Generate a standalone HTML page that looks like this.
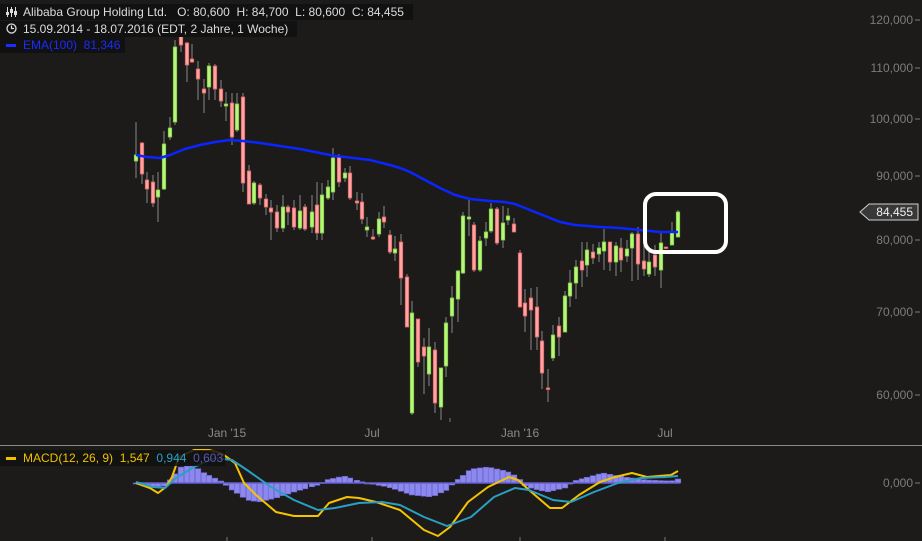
<!DOCTYPE html>
<html><head><meta charset="utf-8"><style>
html,body{margin:0;padding:0;background:#1c1b1a;width:922px;height:541px;overflow:hidden;font-family:"Liberation Sans",sans-serif}
svg{position:absolute;left:0;top:0}
.hd{position:absolute;left:0;height:16px;background:#111;color:#dcdcdc;font-size:12px;line-height:16px;padding-left:23px;white-space:nowrap;box-sizing:border-box}
.ic{position:absolute;left:6px;top:3px}
</style></head><body>
<svg id="s" width="922" height="541" viewBox="0 0 922 541"></svg>
<div class="hd" style="top:4px;width:413px"><svg class="ic" width="12" height="10" viewBox="0 0 12 10"><g stroke="#ddd" stroke-width="1"><line x1="1.5" y1="0" x2="1.5" y2="10"/><line x1="5.5" y1="0" x2="5.5" y2="10"/><line x1="9.5" y1="0" x2="9.5" y2="10"/></g><g fill="#ddd"><rect x="0" y="5" width="3" height="3"/><rect x="4" y="2" width="3" height="4"/><rect x="8" y="4" width="3" height="4"/></g></svg>Alibaba Group Holding Ltd.&nbsp;&nbsp; O: 80,600&nbsp; H: 84,700&nbsp; L: 80,600&nbsp; C: 84,455</div>
<div class="hd" style="top:21px;width:297px"><svg class="ic" width="11" height="11" viewBox="0 0 11 11" style="top:2px"><circle cx="5.5" cy="5.5" r="4.5" fill="none" stroke="#ddd" stroke-width="1.3"/><path d="M5.5 2.5V5.5H8" fill="none" stroke="#ddd" stroke-width="1.2"/></svg>15.09.2014 - 18.07.2016 (EDT, 2 Jahre, 1 Woche)</div>
<div class="hd" style="top:37px;width:125px;color:#1a2cff"><b style="position:absolute;left:6px;top:7px;width:10px;height:3px;background:#1a2cff"></b>EMA(100)&nbsp; 81,346</div>
<div class="hd" style="top:450px;width:225px;background:rgba(17,17,17,.85);color:#f0c000"><b style="position:absolute;left:6px;top:7px;width:10px;height:3px;background:#f0c000"></b>MACD(12, 26, 9)&nbsp; 1,547&nbsp; <span style="color:#2aa0c8">0,944</span>&nbsp; <span style="color:#5a56b0">0,603</span></div>
<script>
var s=document.getElementById('s'),h='';
function L(x1,y1,x2,y2,c,w){h+='<line x1="'+x1+'" y1="'+y1+'" x2="'+x2+'" y2="'+y2+'" stroke="'+c+'" stroke-width="'+(w||1)+'"/>';}
function T(x,y,t,c,a){h+='<text x="'+x+'" y="'+y+'" fill="'+c+'" font-size="12" font-family="Liberation Sans" text-anchor="'+(a||'end')+'">'+t+'</text>';}
var C=[[136,'g',155,161,122,178],[142,'r',143,174,142,184],[147,'r',180,189,172,203],[153,'r',182,203,175,207],[158,'g',190,197,172,222],[164,'g',144,189,131,190],[170,'g',128,137,117,140],[175,'g',47,122,40,125],[181,'r',34,45,33,52],[187,'r',43,65,42,82],[192,'r',59,62,44,63],[198,'r',69,79,61,100],[204,'r',89,93,79,113],[209,'g',66,87,63,100],[215,'r',66,89,64,100],[221,'r',89,101,80,107],[226,'g',104,106,92,121],[232,'r',103,137,93,145],[237,'g',104,130,93,132],[243,'r',97,183,93,192],[249,'r',171,204,165,204],[254,'g',183,203,181,205],[260,'r',185,198,183,205],[266,'r',199,207,194,215],[271,'r',208,212,200,240],[277,'r',212,228,205,232],[283,'g',207,228,195,232],[288,'r',207,212,205,225],[294,'r',208,227,200,230],[300,'g',211,228,195,230],[305,'r',207,229,204,231],[312,'g',212,227,195,233],[317,'r',205,233,182,240],[322,'g',195,233,183,240],[328,'g',187,198,180,200],[333,'g',158,192,148,200],[339,'r',157,182,154,187],[345,'g',173,178,168,182],[350,'r',173,198,166,200],[357,'r',201,203,192,210],[362,'r',202,219,193,224],[367,'g',227,230,217,237],[373,'r',237,239,229,240],[379,'g',219,234,212,237],[384,'r',217,222,206,228],[390,'r',235,252,230,254],[395,'g',249,253,236,261],[401,'r',242,278,234,305],[407,'r',277,327,274,327],[412,'g',313,413,301,415],[418,'r',319,362,319,367],[424,'r',347,356,338,394],[429,'g',347,374,328,386],[435,'r',350,403,342,413],[441,'g',368,407,368,420],[446,'g',323,366,317,377],[452,'g',298,316,286,333],[458,'g',271,299,270,322],[463,'g',216,273,212,274],[469,'g',217,219,200,236],[474,'r',225,270,222,272],[480,'g',241,270,236,272],[486,'g',232,238,222,246],[491,'g',209,231,203,233],[497,'r',209,243,207,245],[503,'g',223,240,206,248],[508,'g',216,220,208,225],[514,'r',224,232,218,232],[520,'r',253,307,250,307],[525,'r',303,316,289,332],[531,'r',298,310,288,350],[537,'r',307,337,287,350],[542,'r',341,373,331,389],[548,'r',388,389,369,402],[553,'g',335,358,325,361],[559,'r',326,337,317,356],[565,'g',296,332,291,332],[570,'g',283,296,270,307],[576,'g',267,283,260,299],[582,'r',261,270,242,287],[587,'g',250,265,242,277],[593,'r',252,258,244,264],[599,'g',248,254,242,262],[604,'g',242,251,229,270],[610,'r',242,262,242,271],[616,'g',246,262,242,276],[621,'r',248,260,238,272],[627,'g',249,256,240,262],[632,'g',234,248,232,281],[638,'r',234,264,227,280],[644,'r',261,269,242,276],[649,'g',262,274,247,277],[655,'r',255,267,245,276],[661,'g',243,270,233,288],[666,'r',247,248,247,249],[672,'g',232,245,222,245],[678,'g',212,237,210,237]];
var yl=[['120,000',20],['110,000',68],['100,000',119],['90,000',176],['80,000',240],['70,000',312],['60,000',395]];
yl.forEach(function(a){T(913,a[1]+4,a[0],'#7c7c7c');L(915,a[1],920,a[1],'#7c7c7c');});
T(913,487,'0,000','#7c7c7c');L(915,483,920,483,'#7c7c7c');
[[227,"Jan '15"],[372,'Jul'],[520,"Jan '16"],[665,'Jul']].forEach(function(a){T(a[0],437,a[1],'#8a8a8a','middle');L(a[0],537,a[0],541,'#777');});
L(450,418,450,422,'#777');
L(0,445.5,922,445.5,'#8a8a8a');
var HK=[[135,0],[150,-4],[165,-3],[174,8],[182,17],[194,17],[206,9],[221,2],[229,-5],[247,-17],[259,-19],[276,-15],[294,-9],[318,-2],[326,3],[344,7],[359,2],[371,-1],[388,-4],[412,-12],[432,-14],[447,-7],[456,2],[471,14],[488,16],[506,12],[518,6],[526,-4],[547,-9],[565,-5],[574,2],[588,6],[603,10],[624,6],[647,3],[671,2],[678,4]];
function hi(x){for(var i=0;i<HK.length-1;i++){if(x>=HK[i][0]&&x<=HK[i+1][0]){var t=(x-HK[i][0])/(HK[i+1][0]-HK[i][0]);return HK[i][1]+t*(HK[i+1][1]-HK[i][1]);}}return 0;}
C.forEach(function(c){var v=hi(c[0]);var y=v>0?483-v:483;h+='<rect x="'+(c[0]-2.8)+'" y="'+y+'" width="5.6" height="'+Math.max(Math.abs(v),1)+'" fill="#8d88ee" stroke="#6660cc" stroke-width="0.6"/>';});
L(135,483,680,483,'#6660cc',1.5);
function P(pts,c,w){h+='<polyline fill="none" stroke="'+c+'" stroke-width="'+w+'" stroke-linejoin="round" points="'+pts+'"/>';}
P('136,483 150,488 158,493 166,487 172,477 179,457 194,450 209,450 221,453 235,463 244,483 256,495 276,512 294,516 318,516 329,503 347,497 359,498 376,502 400,510 412,520 424,530 438,536 450,527 468,502 488,487 509,477 518,480 529,490 550,508 562,508 579,495 600,482 615,477 632,473 647,477 671,475 678,471','#f5c400',2);
P('136,482 153,487 165,488 176,478 194,467 215,458 232,460 247,470 271,487 294,500 318,510 335,508 359,503 382,502 400,505 424,517 447,526 471,517 494,497 515,488 529,490 553,500 571,502 594,492 618,483 641,478 665,477 678,476','#2a9fc4',2);
C.forEach(function(c){L(c[0],c[4],c[0],c[5],'#8a8a8a');var g=c[1]=='g';h+='<rect x="'+(c[0]-1.7)+'" y="'+c[2]+'" width="3.4" height="'+Math.max(c[3]-c[2],1.5)+'" fill="'+(g?'#b8f57f':'#ffa3a3')+'" stroke="'+(g?'#7fd040':'#e06464')+'" stroke-width="0.8"/>';});
P('136,155 147,157 160,158 170,155 185,149 200,145 215,142 230,140 243,141 260,143 280,146 300,149 320,153 335,156 345,157 370,160 390,165 400,168 410,172 425,180 440,188 455,195 470,199 490,201 505,202 515,204 530,210 545,216 560,222 575,225 600,227 620,228 640,230 660,232 678,232','#0a25ff',2.5);
h+='<rect x="645" y="194" width="81" height="58" rx="11" fill="none" stroke="#fff" stroke-width="4"/>';
h+='<polygon points="860,212 869,204 918,204 918,220 869,220" fill="#383838" stroke="#d0d0d0" stroke-width="1"/>';
T(913,216,'84,455','#f0f0f0');
s.innerHTML=h;
</script>
</body></html>
